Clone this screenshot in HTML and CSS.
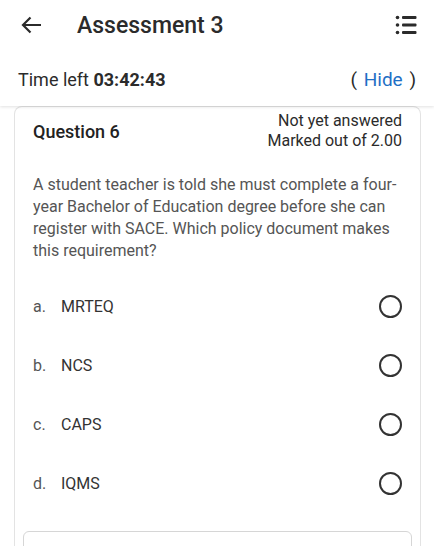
FILE: index.html
```html
<!DOCTYPE html>
<html>
<head>
<meta charset="utf-8">
<link rel="stylesheet" href="styles.css">
</head>
<body>
<div class="page">
  <header class="header">
    <div class="topbar">
      <svg class="back" width="21" height="18" viewBox="0 0 21 18"><path d="M20 9H2.5M9.5 1.5L2 9l7.5 7.5" fill="none" stroke="#2b2b2b" stroke-width="2.2"/></svg>
      <div class="title">Assessment 3</div>
      <svg class="menu" width="24" height="24" viewBox="0 0 24 24">
        <circle cx="3.5" cy="4.5" r="1.8" fill="#2b2b2b"/>
        <circle cx="3.5" cy="12" r="1.8" fill="#2b2b2b"/>
        <circle cx="3.5" cy="19.5" r="1.8" fill="#2b2b2b"/>
        <rect x="8" y="3" width="14.5" height="3" rx="1" fill="#2b2b2b"/>
        <rect x="8" y="10.5" width="14.5" height="3" rx="1" fill="#2b2b2b"/>
        <rect x="8" y="18" width="14.5" height="3" rx="1" fill="#2b2b2b"/>
      </svg>
    </div>
    <div class="timer">
      <div>Time left <b>03:42:43</b></div>
      <div class="hide">(&nbsp;<span class="link">Hide</span>&nbsp;)</div>
    </div>
  </header>
  <main class="card">
    <div class="qhead">
      <div class="qno">Question 6</div>
      <div class="qinfo">Not yet answered<br>Marked out of 2.00</div>
    </div>
    <div class="qtext">A student teacher is told she must complete a four-year Bachelor of Education degree before she can register with SACE. Which policy document makes this requirement?</div>
    <div class="options">
      <div class="opt"><span class="letter">a.</span><span class="otext">MRTEQ</span><span class="radio"></span></div>
      <div class="opt"><span class="letter">b.</span><span class="otext">NCS</span><span class="radio"></span></div>
      <div class="opt"><span class="letter">c.</span><span class="otext">CAPS</span><span class="radio"></span></div>
      <div class="opt"><span class="letter">d.</span><span class="otext">IQMS</span><span class="radio"></span></div>
    </div>
    <div class="box"></div>
  </main>
</div>
</body>
</html>
```
FILE: styles.css
```css
html, body {
  margin: 0;
  padding: 0;
  background: #fff;
}
body {
  font-family: Roboto, "Noto Sans", sans-serif;
  color: #222;
  width: 434px;
  height: 546px;
  overflow: hidden;
}
.page {
  display: flex;
  flex-direction: column;
}
.header {
  position: relative;
  z-index: 2;
  background: #fff;
  box-shadow: 0 1px 3px rgba(0,0,0,0.12);
}
.topbar {
  height: 50px;
  display: flex;
  align-items: center;
  padding: 0 16px 0 21px;
}
.back {
  flex: none;
}
.title {
  margin-left: 35px;
  font-size: 23px;
  font-weight: 500;
  color: #2b2b2b;
  flex: 1;
}
.menu {
  flex: none;
}
.timer {
  height: 56px;
  box-sizing: border-box;
  display: flex;
  align-items: center;
  justify-content: space-between;
  padding: 3px 18px 0 18px;
  font-size: 18px;
  color: #2b2b2b;
}
.timer b {
  font-weight: 700;
}
.hide {
  font-size: 19px;
  word-spacing: 2px;
}
.link {
  color: #1f6fc5;
}
.card {
  margin: 0 13px 0 14px;
  border: 1px solid #e3e3e3;
  border-bottom: none;
  border-radius: 8px 8px 0 0;
  padding: 4px 8px 0 8px;
  height: 460px;
}
.qhead {
  display: flex;
  justify-content: space-between;
  align-items: center;
  padding: 0 10px;
}
.qno {
  font-size: 18px;
  font-weight: 500;
  color: #222;
}
.qinfo {
  text-align: right;
  font-size: 16px;
  line-height: 20px;
  color: #2b2b2b;
}
.qtext {
  margin-top: 23px;
  padding: 0 10px;
  font-size: 16px;
  line-height: 22px;
  color: #555;
}
.options {
  margin-top: 15px;
  display: flex;
  flex-direction: column;
}
.opt {
  height: 59px;
  display: flex;
  align-items: center;
  padding: 0 10px;
  font-size: 16px;
}
.letter {
  width: 28px;
  color: #555;
}
.otext {
  flex: 1;
  color: #333;
}
.radio {
  width: 19px;
  height: 19px;
  border: 2px solid #333;
  border-radius: 50%;
}
.box {
  margin-top: 18px;
  height: 40px;
  border: 1px solid #d6d6d6;
  border-radius: 6px;
}
```
